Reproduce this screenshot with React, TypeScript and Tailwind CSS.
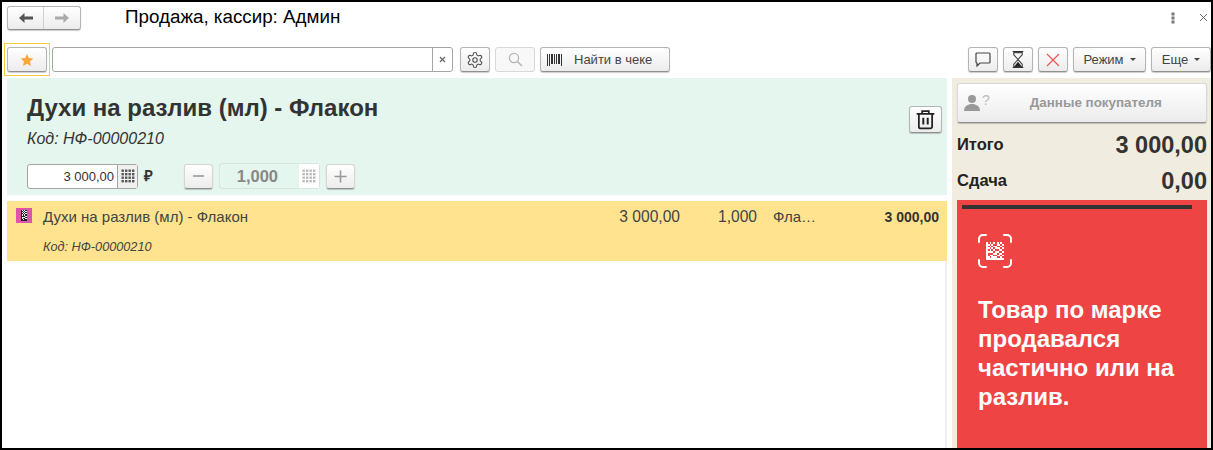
import React from "react";

const btn = "flex items-center justify-center rounded-[3px] border border-[#b4b4b4] border-b-[#8f8f8f] bg-gradient-to-b from-white to-[#ececec] shadow-[0_1px_1px_rgba(0,0,0,0.2)]";

function Dots({ color, size = 16 }: { color: string; size?: number }) {
  const c: React.ReactNode[] = [];
  for (let y = 0; y < 4; y++) for (let x = 0; x < 4; x++) c.push(<rect key={`${x}-${y}`} x={1.5 + x * 3.5} y={1.5 + y * 3.5} width="2.4" height="2.4" fill={color} />);
  return <svg width={size} height={size} viewBox="0 0 16 16">{c}</svg>;
}

function Matrix({ size, fg, bg }: { size: number; fg: string; bg?: string }) {
  const rows = ["1010101010", "1101001101", "1010110010", "1101011101", "1010100110", "1111011001", "1000110110", "1011001101", "1101110010", "1111111111"];
  return (
    <svg width={size} height={size} viewBox="0 0 10 10" shapeRendering="crispEdges">
      {bg && <rect width="10" height="10" fill={bg} />}
      {rows.flatMap((r, y) => r.split("").map((v, x) => (v === "1" ? <rect key={`${x}-${y}`} x={x} y={y} width="1" height="1" fill={fg} /> : null)))}
    </svg>
  );
}

export default function App() {
  return (
    <div className="box-border flex h-[450px] w-[1213px] flex-col overflow-hidden border-2 border-black bg-white pl-[5px] pr-0 font-['Liberation_Sans',sans-serif] text-[#333]">
      {/* header */}
      <div className="flex h-[28px] shrink-0 items-center pt-[3px]">
        <div className={`${btn} h-[24px] w-[74px]`}>
          <div className="flex h-full w-[37px] items-center justify-center border-r border-[#d0d0d0]">
            <svg width="16" height="12" viewBox="0 0 16 12"><path d="M1 6 L6.5 1 V4.5 H15 V7.5 H6.5 V11 Z" fill="#555" /></svg>
          </div>
          <div className="flex h-full w-[37px] items-center justify-center">
            <svg width="16" height="12" viewBox="0 0 16 12"><path d="M15 6 L9.5 1 V4.5 H1 V7.5 H9.5 V11 Z" fill="#aaa" /></svg>
          </div>
        </div>
        <div className="ml-[44px] text-[18.8px] leading-none text-black">Продажа, кассир: Админ</div>
        <div className="ml-auto flex items-center pr-[3px]">
          <svg width="4" height="12" viewBox="0 0 4 12"><rect x="0.5" y="0.5" width="3" height="3" fill="#777" /><rect x="0.5" y="4.5" width="3" height="3" fill="#777" /><rect x="0.5" y="8.5" width="3" height="3" fill="#777" /></svg>
          <svg className="ml-[24px]" width="9" height="9" viewBox="0 0 9 9"><path d="M1 1 L8 8 M8 1 L1 8" stroke="#666" strokeWidth="1" /></svg>
        </div>
      </div>

      {/* toolbar */}
      <div className="mt-[13px] flex h-[33px] shrink-0 items-center">
        <div className="-ml-[3px] box-border flex h-[33px] w-[46px] shrink-0 items-center justify-center border border-[#f7c93e]">
          <div className={`${btn} h-[25px] w-[40px]`}>
            <svg width="14" height="14" viewBox="0 0 24 24"><path d="M12 1.5 L15.2 8.6 L23 9.4 L17.2 14.6 L18.8 22.3 L12 18.4 L5.2 22.3 L6.8 14.6 L1 9.4 L8.8 8.6 Z" fill="#f9a73e" /></svg>
          </div>
        </div>
        <div className="ml-[2px] flex h-[25px] w-[401px] shrink-0 rounded-[3px] border border-[#a5a5a5] bg-white">
          <div className="flex-1" />
          <div className="flex w-[20px] items-center justify-center border-l border-[#a5a5a5]">
            <svg width="7" height="7" viewBox="0 0 7 7"><path d="M1 1 L6 6 M6 1 L1 6" stroke="#666" strokeWidth="1.2" /></svg>
          </div>
        </div>
        <div className={`${btn} ml-[7px] h-[25px] w-[30px] shrink-0`}>
          <svg width="18" height="18" viewBox="0 0 24 24" fill="none" stroke="#555" strokeWidth="1.5" strokeLinecap="round" strokeLinejoin="round">
            <path d="M12.22 2h-.44a2 2 0 0 0-2 2v.18a2 2 0 0 1-1 1.73l-.43.25a2 2 0 0 1-2 0l-.15-.08a2 2 0 0 0-2.73.73l-.22.38a2 2 0 0 0 .73 2.73l.15.1a2 2 0 0 1 1 1.72v.51a2 2 0 0 1-1 1.74l-.15.09a2 2 0 0 0-.73 2.73l.22.38a2 2 0 0 0 2.73.73l.15-.08a2 2 0 0 1 2 0l.43.25a2 2 0 0 1 1 1.73V20a2 2 0 0 0 2 2h.44a2 2 0 0 0 2-2v-.18a2 2 0 0 1 1-1.73l.43-.25a2 2 0 0 1 2 0l.15.08a2 2 0 0 0 2.73-.73l.22-.39a2 2 0 0 0-.73-2.73l-.15-.08a2 2 0 0 1-1-1.74v-.5a2 2 0 0 1 1-1.74l.15-.09a2 2 0 0 0 .73-2.73l-.22-.38a2 2 0 0 0-2.73-.73l-.15.08a2 2 0 0 1-2 0l-.43-.25a2 2 0 0 1-1-1.73V4a2 2 0 0 0-2-2z" />
            <circle cx="12" cy="12" r="3" />
          </svg>
        </div>
        <div className="ml-[5px] flex h-[25px] w-[40px] shrink-0 items-center justify-center rounded-[3px] border border-[#d8d8d8] bg-[#f8f8f8]">
          <svg width="15" height="15" viewBox="0 0 15 15" fill="none" stroke="#b5b5b5" strokeWidth="1.2"><circle cx="6" cy="6" r="4.6" /><path d="M9.5 9.5 L14 14" strokeWidth="1.5" /></svg>
        </div>
        <div className={`${btn} ml-[5px] h-[25px] w-[130px] shrink-0 justify-start pl-[6px]`}>
          <svg width="16" height="12" viewBox="0 0 16 12" fill="#333" shapeRendering="crispEdges">
            <rect x="0" width="1" height="12" /><rect x="2" width="1" height="12" /><rect x="4" width="2" height="10" /><rect x="7" width="1" height="10" /><rect x="9" width="1" height="10" /><rect x="11" width="2" height="10" /><rect x="14" width="1" height="12" />
          </svg>
          <span className="ml-[11px] text-[13px] text-[#444]">Найти в чеке</span>
        </div>
        <div className="ml-auto flex shrink-0 items-center gap-[5px] pr-0">
          <div className={`${btn} h-[25px] w-[30px]`}>
            <svg width="16" height="15" viewBox="0 0 16 15" fill="none" stroke="#444" strokeWidth="1.2"><path d="M2 1 H14 a1 1 0 0 1 1 1 V10 a1 1 0 0 1 -1 1 H5 L2 14 V11 a1 1 0 0 1 -1 -1 V2 a1 1 0 0 1 1 -1 Z" /></svg>
          </div>
          <div className={`${btn} h-[25px] w-[30px]`}>
            <svg width="14" height="17" viewBox="0 0 12 16"><path d="M1 0.5 H11 M1 15.5 H11" stroke="#333" /><path d="M2 1.5 H10 V3.5 L6 8 L10 12.5 V14.5 H2 V12.5 L6 8 L2 3.5 Z" fill="none" stroke="#444" /><path d="M2.5 14.5 L6 10 L9.5 14.5 Z" fill="#222" /></svg>
          </div>
          <div className={`${btn} h-[25px] w-[30px]`}>
            <svg width="14" height="14" viewBox="0 0 14 14"><path d="M1 1 L13 13 M13 1 L1 13" stroke="#ee5555" strokeWidth="1.2" /></svg>
          </div>
          <div className={`${btn} h-[25px] w-[73px]`}>
            <span className="text-[13px] text-[#444]">Режим</span>
            <span className="ml-[6px] h-0 w-0 border-x-[3px] border-t-[3px] border-x-transparent border-t-[#444]" />
          </div>
          <div className={`${btn} h-[25px] w-[60px]`}>
            <span className="text-[13px] text-[#444]">Еще</span>
            <span className="ml-[6px] h-0 w-0 border-x-[3px] border-t-[3px] border-x-transparent border-t-[#444]" />
          </div>
        </div>
      </div>

      {/* main */}
      <div className="mt-[2px] flex min-h-0 flex-1">
        <div className="flex w-[940px] shrink-0 flex-col">
          <div className="flex h-[117px] shrink-0 justify-between bg-[#e4f6ee] pl-[20px] pr-[5px]">
            <div className="flex flex-col">
              <div className="mt-[17px] text-[24px] font-bold leading-[26px] text-[#333]">Духи на разлив (мл) - Флакон</div>
              <div className="mt-[9px] text-[16px] italic leading-[18px] text-[#333]">Код: НФ-00000210</div>
              <div className="mt-[15px] flex items-center">
                <div className="flex h-[25px] w-[111px] rounded-[3px] border border-[#a5a5a5] bg-white">
                  <div className="flex-1 pr-[3px] text-right text-[13px] leading-[23px] text-[#333]">3 000,00</div>
                  <div className="flex w-[20px] items-center justify-center border-l border-[#a5a5a5] bg-[#f0f0f0]"><Dots color="#555" /></div>
                </div>
                <div className="ml-[6px] text-[15px] font-bold">₽</div>
                <div className={`${btn} ml-[31px] h-[25px] w-[29px] border-[#d5d5d5]`}>
                  <div className="h-[2px] w-[11px] bg-[#aaa]" />
                </div>
                <div className="ml-[6px] flex h-[26px] w-[101px] rounded-[3px] border border-[#d8e4df] bg-[#e4f6ee]">
                  <div className="flex-1 pr-[21px] text-right text-[16.5px] font-bold leading-[24px] text-[#888]">1,000</div>
                  <div className="flex w-[20px] items-center justify-center bg-white"><Dots color="#bbb" /></div>
                </div>
                <div className={`${btn} ml-[6px] h-[25px] w-[29px] border-[#d5d5d5]`}>
                  <svg width="13" height="13" viewBox="0 0 13 13"><path d="M6.5 0.5 V12.5 M0.5 6.5 H12.5" stroke="#999" strokeWidth="1.6" /></svg>
                </div>
              </div>
            </div>
            <div className={`${btn} mt-[28px] h-[27px] w-[33px]`}>
              <svg width="21" height="21" viewBox="0 0 19 19" fill="none" stroke="#222" strokeWidth="1.6"><path d="M1.5 4.5 H17.5 M6.5 4.5 V2 H12.5 V4.5" /><path d="M3.5 4.5 V16 a1.5 1.5 0 0 0 1.5 1.5 H14 a1.5 1.5 0 0 0 1.5 -1.5 V4.5" /><path d="M7.5 8 V14 M11.5 8 V14" strokeWidth="1.8" /></svg>
            </div>
          </div>
          <div className="mt-[6px] flex h-[60px] shrink-0 bg-[#ffe38f] text-[15px] text-[#444]">
            <div className="ml-[9px] mt-[7px] flex h-[15px] w-[16px] shrink-0 items-center justify-center bg-[#dd55aa]">
              <div className="w-[6px] overflow-hidden"><Matrix size={11} fg="#222" bg="#eee" /></div>
            </div>
            <div className="ml-[11px] flex w-[400px] shrink-0 flex-col">
              <div className="mt-[8px] leading-[16px]">Духи на разлив (мл) - Флакон</div>
              <div className="mt-[15px] text-[12.7px] italic leading-[14px]">Код: НФ-00000210</div>
            </div>
            <div className="mt-[8px] w-[237px] shrink-0 text-right text-[15.6px] leading-[16px]">3 000,00</div>
            <div className="mt-[8px] w-[77px] shrink-0 text-right text-[15.6px] leading-[16px]">1,000</div>
            <div className="ml-[16px] mt-[8px] w-[40px] shrink-0 leading-[16px]">Фла…</div>
            <div className="mt-[8px] w-[126px] shrink-0 text-right text-[14px] font-bold leading-[16px] text-[#333]">3 000,00</div>
          </div>
          <div className="flex-1 border-r-2 border-[#f0f0f0]" />
        </div>

        <div className="ml-[5px] flex min-w-0 flex-1 flex-col bg-[#f1ece0] pl-[5px] pr-[2px]">
          <div className={`${btn} mt-[5px] h-[40px] w-[250px] shrink-0 justify-start border-[#d8d8d8] pl-[5px]`}>
            <svg width="26" height="20" viewBox="0 0 26 20">
              <circle cx="9" cy="6" r="4" fill="#999" />
              <path d="M1 18 C1 13 5 11 9 11 C13 11 17 13 17 18 Z" fill="#999" />
            </svg>
            <span className="-ml-[7px] -mt-[6px] text-[14px] text-[#bbb]">?</span>
            <span className="ml-[40px] text-[13.4px] font-bold text-[#999]">Данные покупателя</span>
          </div>
          <div className="mt-[7px] flex h-[30px] w-[250px] shrink-0 items-center justify-between">
            <span className="-mt-[2px] text-[16.5px] font-bold text-[#222]">Итого</span>
            <span className="mt-[2px] text-[23.5px] font-bold text-[#333]">3 000,00</span>
          </div>
          <div className="mt-[6px] flex h-[30px] w-[250px] shrink-0 items-center justify-between">
            <span className="-mt-[2px] text-[16.5px] font-bold text-[#222]">Сдача</span>
            <span className="mt-[2px] text-[23.5px] font-bold text-[#333]">0,00</span>
          </div>
          <div className="mt-[4px] w-[250px] flex-1 bg-[#ee4444] px-[5px] pt-[5px]">
            <div className="h-[4px] w-[230px] bg-[#333]" />
            <div className="relative ml-[15px] mt-[24px] h-[36px] w-[36px]">
              <svg className="absolute left-0 top-0" width="36" height="36" viewBox="0 0 36 36" fill="none" stroke="#fff" strokeWidth="2" strokeLinecap="round">
                <path d="M2 9 V6 a4 4 0 0 1 4 -4 H9 M27 2 H30 a4 4 0 0 1 4 4 V9 M34 27 V30 a4 4 0 0 1 -4 4 H27 M9 34 H6 a4 4 0 0 1 -4 -4 V27" />
              </svg>
              <div className="absolute left-[9px] top-[9px]"><Matrix size={18} fg="#fff" /></div>
            </div>
            <div className="ml-[16px] mt-[26px] text-[24px] font-bold leading-[29px] text-white">Товар по марке<br />продавался<br />частично или на<br />разлив.</div>
          </div>
        </div>
      </div>
    </div>
  );
}
